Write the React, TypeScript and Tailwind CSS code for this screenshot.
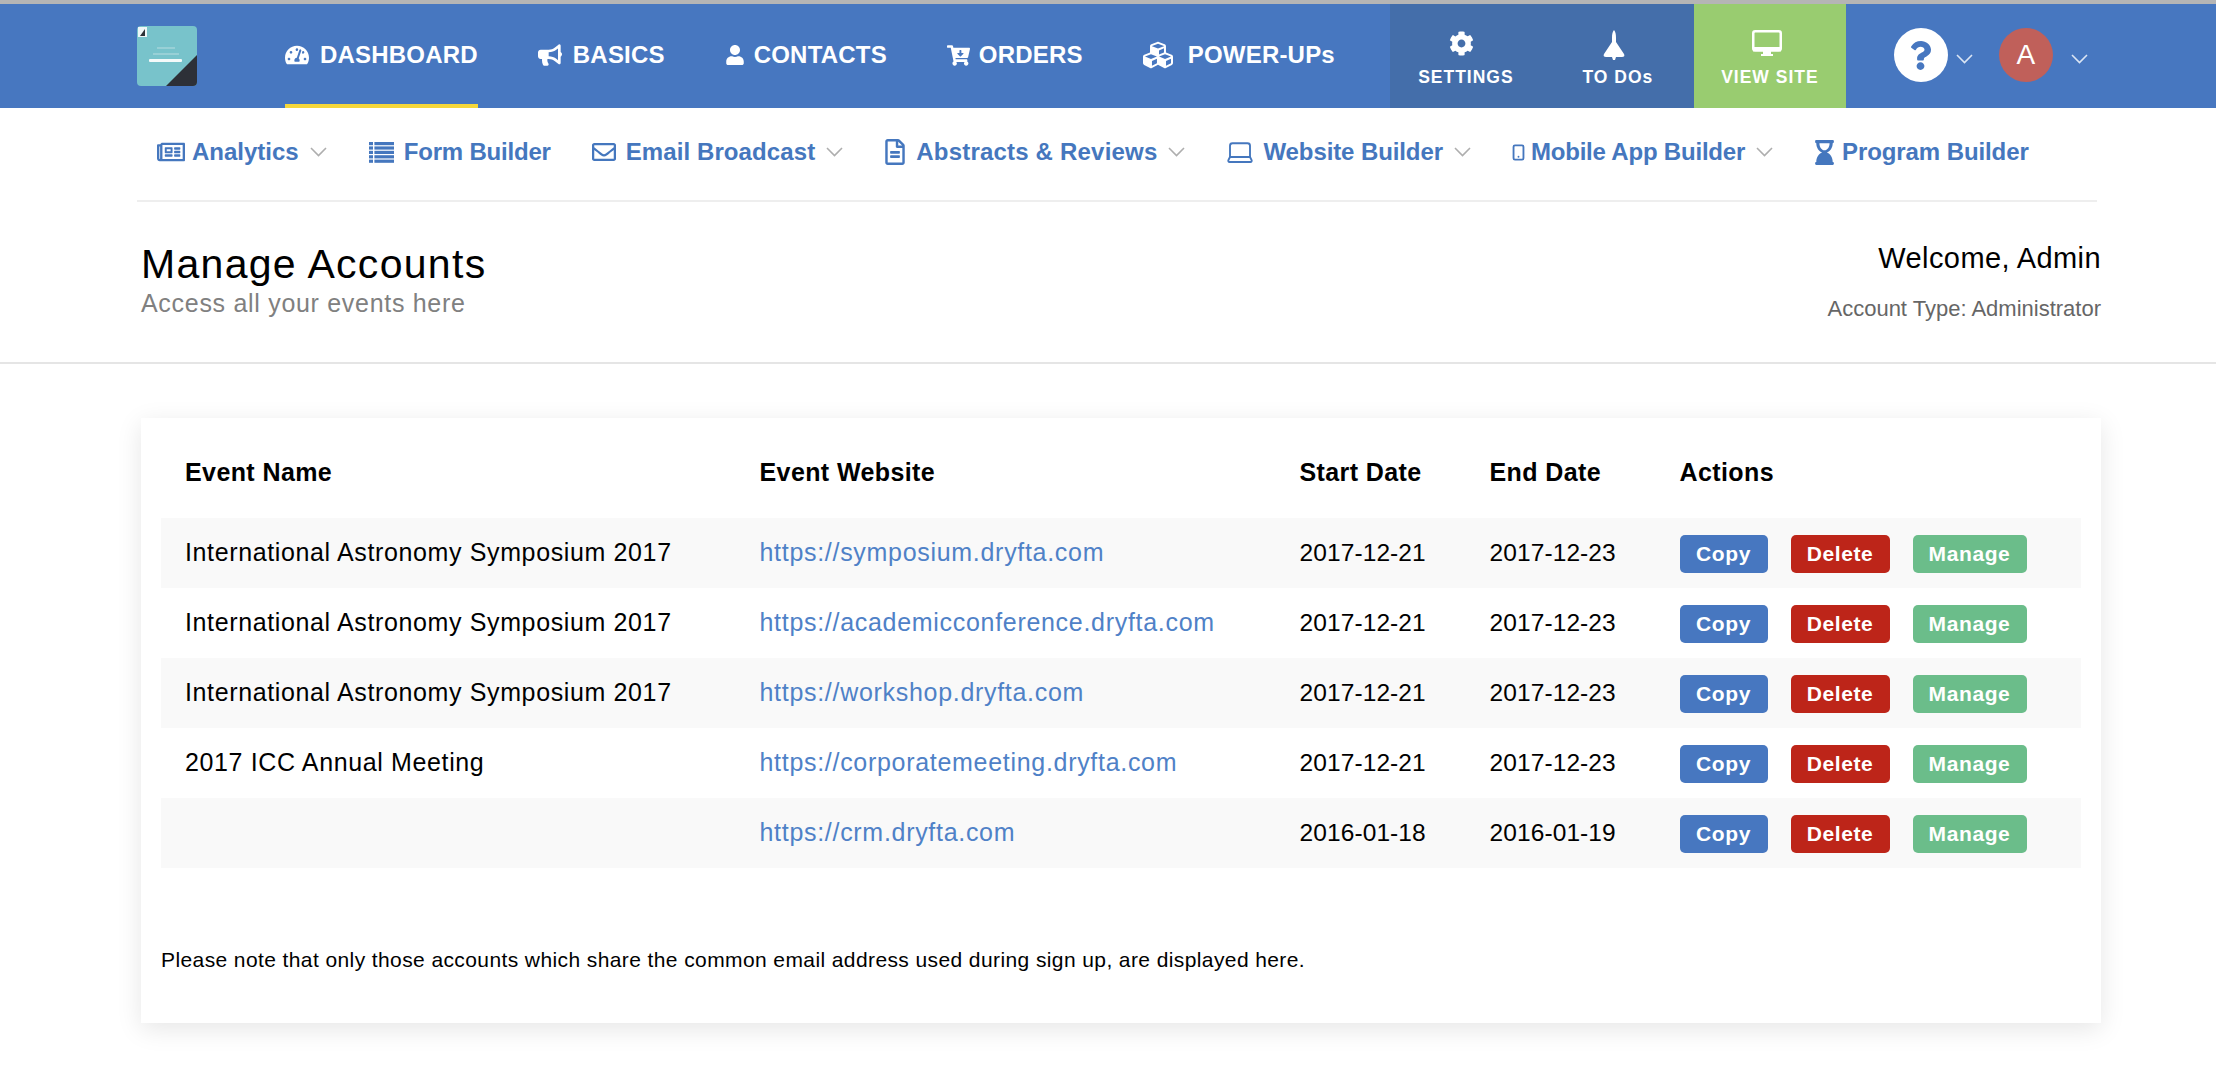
import { ReactNode } from 'react';
import {
  FaTachometerAlt,
  FaBullhorn,
  FaUser,
  FaCartArrowDown,
  FaCubes,
  FaCog,
  FaQuestion,
  FaRegNewspaper,
  FaRegEnvelope,
  FaRegFileAlt,
  FaHourglassEnd,
} from 'react-icons/fa';
import { Laptop, Smartphone } from 'lucide-react';

function Chevron({ className }: { className: string }) {
  return (
    <svg width="17" height="10" viewBox="0 0 17 10" className={className}>
      <path d="M1 1l7.5 7.5L16 1" fill="none" stroke="currentColor" strokeWidth="1.6" />
    </svg>
  );
}

function Logo() {
  return (
    <svg width="60" height="60" viewBox="0 0 60 60" className="shrink-0">
      <rect width="60" height="60" rx="4" fill="#78c3cb" />
      <path d="M60 29V56a4 4 0 0 1-4 4H29Z" fill="#2d3037" />
      <rect x="1" y="1" width="9" height="10" fill="#eef6f7" />
      <path d="M3 10L8 3V10Z" fill="#2d3037" />
      <rect x="20" y="21" width="18" height="2" fill="#98d0d6" />
      <rect x="16" y="27" width="26" height="2" fill="#98d0d6" />
      <rect x="12" y="33" width="33" height="3" rx="1" fill="#f4fafa" />
    </svg>
  );
}

function ListIcon() {
  return (
    <svg width="25" height="21" viewBox="0 0 25 21" fill="currentColor">
      {[0, 4.4, 8.8, 13.2, 17.6].map((y) => (
        <g key={y}>
          <rect x="0" y={y} width="4" height="3.2" />
          <rect x="5.4" y={y} width="19.6" height="3.2" />
        </g>
      ))}
    </svg>
  );
}

function DesktopIcon() {
  return (
    <svg width="30" height="26" viewBox="0 0 30 26" className="mr-[6px]">
      <rect x="1.25" y="1.25" width="27.5" height="19" rx="2" fill="none" stroke="white" strokeWidth="2.5" />
      <rect x="1" y="17" width="28" height="4.5" fill="white" />
      <path d="M11 21h8v3h2v2H9v-2h2Z" fill="white" />
    </svg>
  );
}

function ShuttleIcon() {
  return (
    <svg width="22" height="30" viewBox="0 0 22 30" fill="white" className="mr-[8px]">
      <path d="M11 0C12.5 2 13 4 13 8V12L21 24C22 26 21 27 19 27H13L12 30H10L9 27H3C1 27 0 26 1 24L9 12V8C9 4 9.5 2 11 0Z" />
    </svg>
  );
}

const mainNav: { label: string; icon: ReactNode; gap: string; active?: boolean }[] = [
  { label: 'DASHBOARD', icon: <FaTachometerAlt size={24} />, gap: 'gap-[11px]', active: true },
  { label: 'BASICS', icon: <FaBullhorn size={24} />, gap: 'gap-[11px]' },
  { label: 'CONTACTS', icon: <FaUser size={20} />, gap: 'gap-[9px]' },
  { label: 'ORDERS', icon: <FaCartArrowDown size={23} />, gap: 'gap-[9px]' },
  { label: 'POWER-UPs', icon: <FaCubes size={30} />, gap: 'gap-[15px]' },
];

const subNav: { label: string; icon: ReactNode; iconGap: string; track: string; next: string; chevron?: boolean }[] = [
  { label: 'Analytics', icon: <FaRegNewspaper size={28} />, iconGap: 'mr-[7px]', track: 'tracking-[0px]', next: 'mr-[42px]', chevron: true },
  { label: 'Form Builder', icon: <ListIcon />, iconGap: 'mr-[10px]', track: 'tracking-[-0.2px]', next: 'mr-[41px]' },
  { label: 'Email Broadcast', icon: <FaRegEnvelope size={24} />, iconGap: 'mr-[10px]', track: 'tracking-[0.1px]', next: 'mr-[39px]', chevron: true },
  { label: 'Abstracts & Reviews', icon: <FaRegFileAlt size={26} />, iconGap: 'mr-[8px]', track: 'tracking-[0.2px]', next: 'mr-[40px]', chevron: true },
  { label: 'Website Builder', icon: <Laptop size={30} strokeWidth={1.5} />, iconGap: 'mr-[8px]', track: 'tracking-[-0.1px]', next: 'mr-[39px]', chevron: true },
  { label: 'Mobile App Builder', icon: <Smartphone size={17} strokeWidth={2.6} />, iconGap: 'mr-[4px]', track: 'tracking-[-0.2px]', next: 'mr-[39px]', chevron: true },
  { label: 'Program Builder', icon: <FaHourglassEnd size={25} />, iconGap: 'mr-[5px]', track: 'tracking-[-0.1px]', next: '' },
];

const rows = [
  ['International Astronomy Symposium 2017', 'https://symposium.dryfta.com', '2017-12-21', '2017-12-23'],
  ['International Astronomy Symposium 2017', 'https://academicconference.dryfta.com', '2017-12-21', '2017-12-23'],
  ['International Astronomy Symposium 2017', 'https://workshop.dryfta.com', '2017-12-21', '2017-12-23'],
  ['2017 ICC Annual Meeting', 'https://corporatemeeting.dryfta.com', '2017-12-21', '2017-12-23'],
  ['', 'https://crm.dryfta.com', '2016-01-18', '2016-01-19'],
];

export default function App() {
  return (
    <div className="min-h-screen bg-white font-['Liberation_Sans',Arial,sans-serif] text-black">
      {/* Top bar */}
      <header className="h-[108px] bg-[#4777c0] border-t-[4px] border-[#b5b5b5] flex pl-[137px] text-white">
        <div className="flex items-center">
          <Logo />
        </div>
        <nav className="flex ml-[88px] gap-[60px]">
          {mainNav.map((item) => (
            <a
              key={item.label}
              className={`flex items-start pt-[35px] ${item.gap} text-[24px] leading-[32px] font-bold tracking-[0.2px] ${
                item.active ? 'border-b-[4px] border-[#f5d73a]' : ''
              }`}
            >
              <span className="h-[32px] flex items-center">{item.icon}</span>
              {item.label}
            </a>
          ))}
        </nav>
        <div className="ml-[55px] flex bg-[#446eaa]">
          <a className="w-[152px] flex flex-col items-center pt-[27px]">
            <FaCog size={25} className="mr-[8px]" />
            <span className="mt-[11px] text-[17.5px] leading-[20px] font-bold tracking-[1px]">SETTINGS</span>
          </a>
          <a className="w-[152px] flex flex-col items-center pt-[26px]">
            <ShuttleIcon />
            <span className="mt-[7px] text-[17.5px] leading-[20px] font-bold tracking-[1px]">TO DOs</span>
          </a>
        </div>
        <a className="w-[152px] bg-[#99cc70] flex flex-col items-center pt-[26px]">
          <DesktopIcon />
          <span className="mt-[11px] text-[17.5px] leading-[20px] font-bold tracking-[1px]">VIEW SITE</span>
        </a>
        <div className="flex items-center pb-[2px]">
          <span className="ml-[48px] w-[54px] h-[54px] rounded-full bg-white flex items-center justify-center text-[#4777c0]">
            <FaQuestion size={29} />
          </span>
          <Chevron className="ml-[8px] text-[#dbe5f4] mt-[8px]" />
          <span className="ml-[26px] w-[54px] h-[54px] rounded-full bg-[#c0605a] flex items-center justify-center text-[28px]">
            A
          </span>
          <Chevron className="ml-[18px] text-[#dbe5f4] mt-[8px]" />
        </div>
      </header>

      {/* Sub navigation */}
      <div className="mx-[137px] w-[1960px] h-[94px] border-b-[2px] border-[#eeeeee] flex items-start pt-[28px] pl-[20px] text-[#4577be]">
        {subNav.map((item) => (
          <a
            key={item.label}
            className={`flex items-center h-[32px] ${item.next} ${item.track} text-[24px] font-bold whitespace-nowrap`}
          >
            <span className={`flex items-center justify-center ${item.iconGap}`}>{item.icon}</span>
            {item.label}
            {item.chevron && <Chevron className="ml-[11px] text-[#aeaeae]" />}
          </a>
        ))}
      </div>

      {/* Page title */}
      <div className="h-[162px] border-b-[2px] border-[#e5e5e5] pl-[141px] pr-[115px] flex justify-between">
        <div className="pt-[39px]">
          <h1 className="text-[41px] leading-[47px] tracking-[1.3px] text-black">Manage Accounts</h1>
          <p className="mt-[1px] text-[25px] leading-[28px] tracking-[0.7px] text-[#808080]">Access all your events here</p>
        </div>
        <div className="pt-[39px] text-right">
          <p className="text-[29px] leading-[34px] tracking-[0.4px]">Welcome, Admin</p>
          <p className="mt-[21px] text-[22px] leading-[26px] text-[#666666]">Account Type: Administrator</p>
        </div>
      </div>

      {/* Accounts card */}
      <div className="ml-[141px] mt-[54px] w-[1960px] h-[605px] bg-white shadow-[0_6px_24px_rgba(0,0,0,0.1)] pt-[20px] px-[20px]">
        <table className="w-[1920px] table-fixed border-collapse">
          <colgroup>
            <col className="w-[574.5px]" />
            <col className="w-[540px]" />
            <col className="w-[190px]" />
            <col className="w-[190px]" />
            <col />
          </colgroup>
          <thead>
            <tr className="h-[80px] text-left text-[25px] font-bold tracking-[0.4px]">
              <th className="px-[24px] pb-[10px]">Event Name</th>
              <th className="px-[24px] pb-[10px]">Event Website</th>
              <th className="px-[24px] pb-[10px]">Start Date</th>
              <th className="px-[24px] pb-[10px]">End Date</th>
              <th className="px-[24px] pb-[10px]">Actions</th>
            </tr>
          </thead>
          <tbody>
            {rows.map((row, i) => (
              <tr key={row[1]} className={`h-[70px] text-[25px] ${i % 2 === 0 ? 'bg-[#f9f9f9]' : ''}`}>
                <td className="px-[24px] tracking-[0.63px] whitespace-nowrap">{row[0]}</td>
                <td className="px-[24px] tracking-[0.7px] text-[#4f81c7] whitespace-nowrap">{row[1]}</td>
                <td className="px-[24px] text-[24.5px] tracking-[0.1px]">{row[2]}</td>
                <td className="px-[24px] text-[24.5px] tracking-[0.1px]">{row[3]}</td>
                <td className="px-[24px]">
                  <div className="flex gap-[23px] mt-[2px] text-[21px] font-bold tracking-[0.6px] text-white">
                    <button className="w-[88px] h-[38px] rounded-[5px] bg-[#4777c0]">Copy</button>
                    <button className="w-[99px] h-[38px] rounded-[5px] bg-[#bd2519]">Delete</button>
                    <button className="w-[114px] h-[38px] rounded-[5px] bg-[#6bbd8a]">Manage</button>
                  </div>
                </td>
              </tr>
            ))}
          </tbody>
        </table>
        <p className="mt-[79px] text-[21px] leading-[26px] tracking-[0.4px]">
          Please note that only those accounts which share the common email address used during sign up, are displayed here.
        </p>
      </div>
    </div>
  );
}
